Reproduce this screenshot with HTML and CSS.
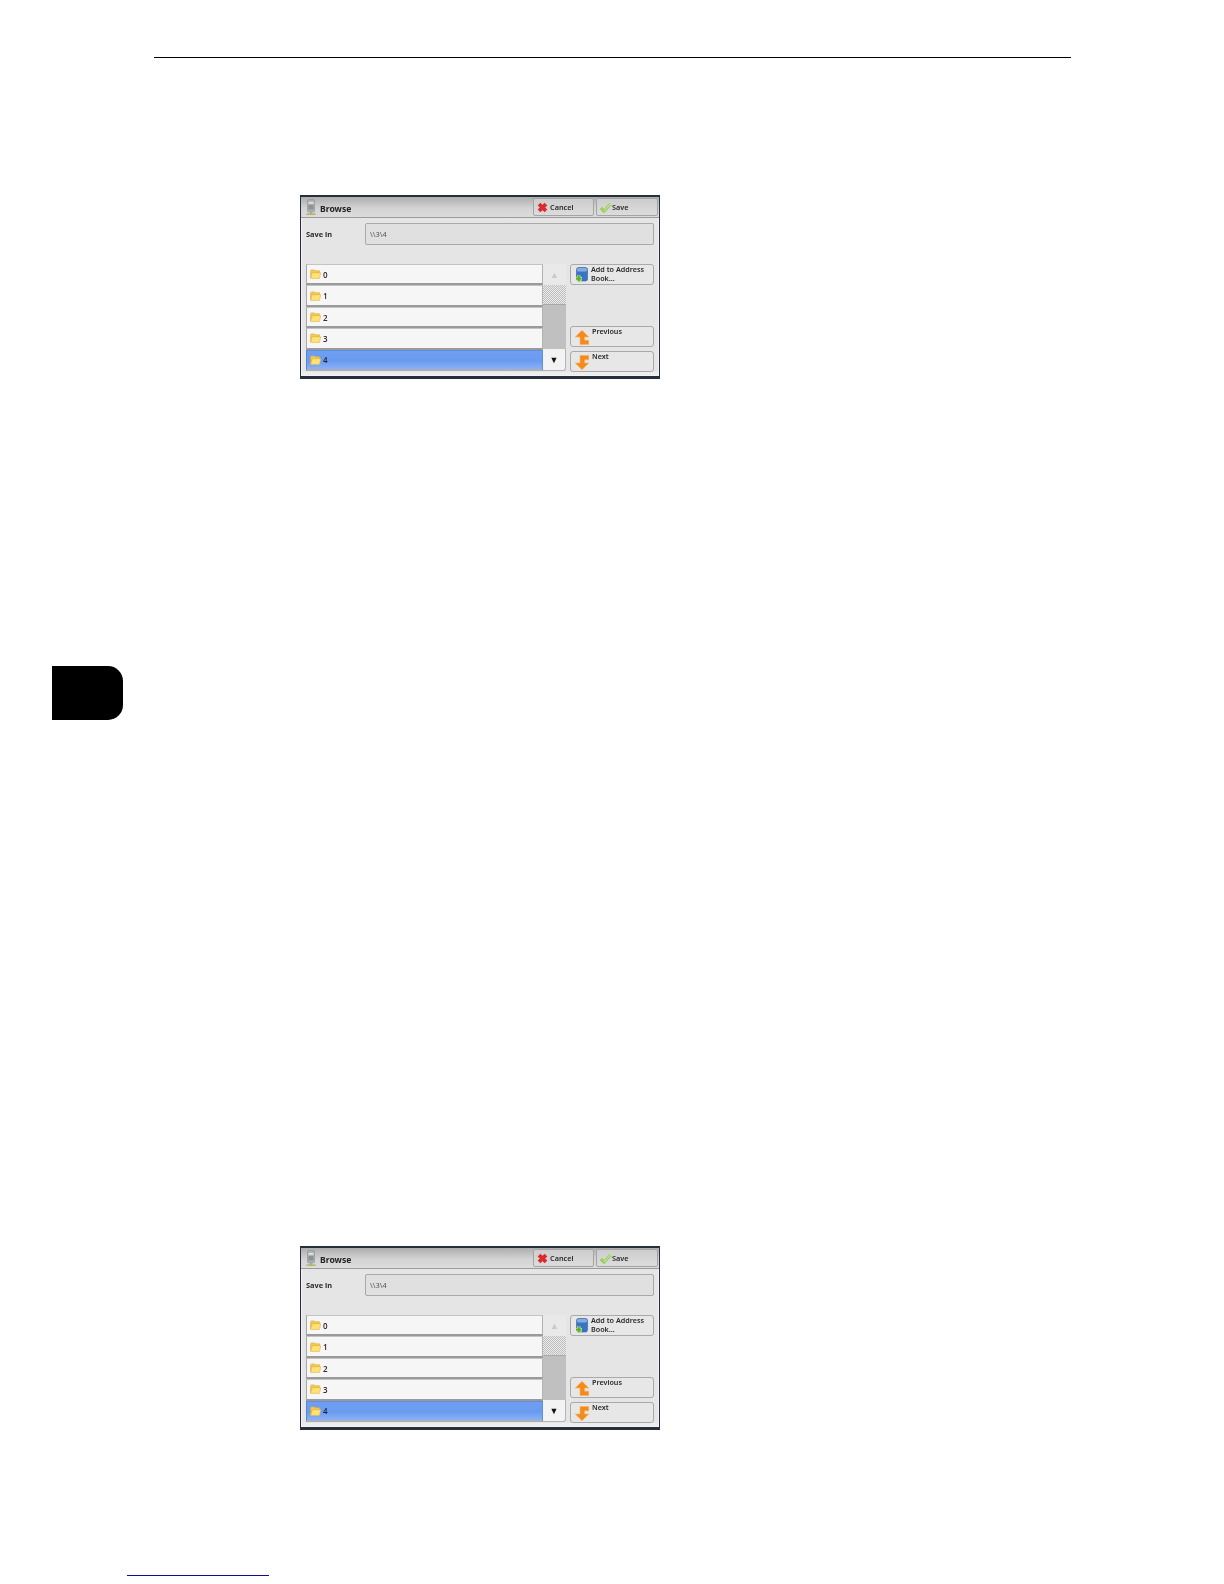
FILE: index.html
```html
<!DOCTYPE html>
<html lang="en">
<head>
<meta charset="utf-8">
<title>Browse</title>
<link rel="stylesheet" href="styles.css">
</head>
<body>
<svg class="sprite" xmlns="http://www.w3.org/2000/svg">
  <symbol id="i-device" viewBox="0 0 10 16">
    <rect x="1.5" y="0.5" width="7" height="12.5" rx="1.5" fill="#aeb2b4" stroke="#8b9092" stroke-width=".6"/>
    <rect x="2.5" y="3" width="5" height="1.6" fill="#e4e6e6"/>
    <rect x="2.5" y="6" width="5" height="4.5" fill="#8d9294"/>
    <path d="M5 13V15M0.5 15.2H9.5" stroke="#a9a848" stroke-width="1.2" fill="none"/>
  </symbol>
  <symbol id="i-folder" viewBox="0 0 11 10">
    <path d="M.6 8.8V1.6L1.4 .9H4.4L5.2 1.8H9.6V4H2Z" fill="#f2c94e" stroke="#dcae3a" stroke-width=".6"/>
    <path d="M.6 9.4 2.2 3.8H10.8L9.4 9.4Z" fill="#ffe37a" stroke="#e0b444" stroke-width=".6"/>
  </symbol>
  <symbol id="i-cancel" viewBox="0 0 12 12">
    <path d="M2.2 2.2 9.8 9.8M9.8 2.2 2.2 9.8" stroke="#dc2b30" stroke-width="4.2" fill="none"/>
  </symbol>
  <symbol id="i-save" viewBox="0 0 13 11">
    <path d="M1.8 6 5 9.2 11.5 2" stroke="#9ccf62" stroke-width="3.2" stroke-linejoin="round" fill="none"/>
    <path d="M5 9 11.5 2" stroke="#cfe89f" stroke-width="1" fill="none"/>
  </symbol>
  <symbol id="i-add" viewBox="0 0 13 15">
    <rect x="1.5" y="0.5" width="11" height="13.5" rx="2" fill="#3b74c2" stroke="#2f62aa" stroke-width=".6"/>
    <rect x="2" y="1" width="10" height="3.4" rx="1.5" fill="#86ade0"/>
    <path d="M3.8 8.4V15M.6 11.7H7" stroke="#d9f0c4" stroke-width="3.4"/>
    <path d="M3.8 8.8V14.6M1 11.7H6.6" stroke="#5cb02a" stroke-width="2.2"/>
  </symbol>
  <symbol id="i-up" viewBox="0 0 14 15">
    <path d="M7 .3 13.7 7H9.6V10.2H13.8V14.6H5V7H.3Z" fill="#f48a1e" stroke="#fbb256" stroke-width=".6"/>
  </symbol>
  <symbol id="i-down" viewBox="0 0 14 15">
    <path d="M13.8 .4V4.8H9.6V8H13.7L7 14.7.3 8H5V.4Z" fill="#f48a1e" stroke="#fbb256" stroke-width=".6"/>
  </symbol>
</svg>

<main class="page">
  <div class="top-rule"></div>

  <section class="screen screen-first">
    <header class="titlebar">
      <svg class="ico-device"><use href="#i-device"/></svg>
      <h2 class="title">Browse</h2>
      <div class="actions">
        <button class="action action-cancel"><svg class="ico-cancel"><use href="#i-cancel"/></svg>Cancel</button>
        <button class="action action-save"><svg class="ico-save"><use href="#i-save"/></svg>Save</button>
      </div>
    </header>
    <div class="savein">
      <span class="savein-label">Save in</span>
      <div class="savein-field">\\3\4</div>
    </div>
    <div class="browser">
      <ul class="folders">
        <li class="folder"><svg class="ico-folder"><use href="#i-folder"/></svg>0</li>
        <li class="folder"><svg class="ico-folder"><use href="#i-folder"/></svg>1</li>
        <li class="folder"><svg class="ico-folder"><use href="#i-folder"/></svg>2</li>
        <li class="folder"><svg class="ico-folder"><use href="#i-folder"/></svg>3</li>
        <li class="folder folder-selected"><svg class="ico-folder"><use href="#i-folder"/></svg>4</li>
      </ul>
      <div class="scroll">
        <div class="scroll-up">▲</div>
        <div class="scroll-thumb"></div>
        <div class="scroll-track"></div>
        <div class="scroll-down">▼</div>
      </div>
      <div class="side">
        <button class="side-btn"><svg class="ico-add"><use href="#i-add"/></svg><span class="side-text">Add to Address<br>Book...</span></button>
        <div class="side-nav">
          <button class="side-btn"><svg class="ico-arrow"><use href="#i-up"/></svg><span class="side-text">Previous</span></button>
          <button class="side-btn"><svg class="ico-arrow"><use href="#i-down"/></svg><span class="side-text">Next</span></button>
        </div>
      </div>
    </div>
  </section>

  <div class="chapter-tab"></div>

  <section class="screen screen-second">
    <header class="titlebar">
      <svg class="ico-device"><use href="#i-device"/></svg>
      <h2 class="title">Browse</h2>
      <div class="actions">
        <button class="action action-cancel"><svg class="ico-cancel"><use href="#i-cancel"/></svg>Cancel</button>
        <button class="action action-save"><svg class="ico-save"><use href="#i-save"/></svg>Save</button>
      </div>
    </header>
    <div class="savein">
      <span class="savein-label">Save in</span>
      <div class="savein-field">\\3\4</div>
    </div>
    <div class="browser">
      <ul class="folders">
        <li class="folder"><svg class="ico-folder"><use href="#i-folder"/></svg>0</li>
        <li class="folder"><svg class="ico-folder"><use href="#i-folder"/></svg>1</li>
        <li class="folder"><svg class="ico-folder"><use href="#i-folder"/></svg>2</li>
        <li class="folder"><svg class="ico-folder"><use href="#i-folder"/></svg>3</li>
        <li class="folder folder-selected"><svg class="ico-folder"><use href="#i-folder"/></svg>4</li>
      </ul>
      <div class="scroll">
        <div class="scroll-up">▲</div>
        <div class="scroll-thumb"></div>
        <div class="scroll-track"></div>
        <div class="scroll-down">▼</div>
      </div>
      <div class="side">
        <button class="side-btn"><svg class="ico-add"><use href="#i-add"/></svg><span class="side-text">Add to Address<br>Book...</span></button>
        <div class="side-nav">
          <button class="side-btn"><svg class="ico-arrow"><use href="#i-up"/></svg><span class="side-text">Previous</span></button>
          <button class="side-btn"><svg class="ico-arrow"><use href="#i-down"/></svg><span class="side-text">Next</span></button>
        </div>
      </div>
    </div>
  </section>

  <div class="footer-link"></div>
</main>
</body>
</html>
```

FILE: styles.css
```css
* { box-sizing: border-box; }
html, body { margin: 0; padding: 0; background: #fff; }
body { font-family: "Noto Sans", "Liberation Sans", sans-serif; color: #1c1c1c; }
.sprite { display: none; }

.page { height: 1584px; overflow: hidden; padding-top: 57px; }
.top-rule { height: 1px; width: 917px; margin-left: 154px; background: #000; }

.screen {
  width: 360px; height: 184px; margin-left: 300px;
  display: flex; flex-direction: column;
  background: #e5e5e5;
  border: 1px solid #26303c;
  border-top-width: 2px; border-bottom-width: 3px;
  box-shadow: inset 0 0 0 1px #f3f3f3, inset 0 -4px 0 #ededed;
  filter: blur(.3px);
}
.screen-first { margin-top: 137px; }
.screen-second { margin-top: 526px; }

.chapter-tab {
  width: 71px; height: 54px; margin: 287px 0 0 52px;
  background: #000; border-radius: 0 15px 15px 0;
}
.footer-link { width: 142px; height: 1px; margin: 145px 0 0 127px; background: #0e0e8a; }

/* title bar */
.titlebar {
  height: 21px; flex: none;
  display: flex; align-items: center;
  padding: 0 1px 0 5px;
  background: linear-gradient(#adadad, #d3d3d3 55%, #dcdcdc);
  border-bottom: 1px solid #9b9b9b;
}
.ico-device { width: 10px; height: 16px; margin-right: 4px; flex: none; }
.title { margin: 3px 0 0; font-size: 8.6px; font-weight: 700; color: #222; }
.actions { margin-left: auto; display: flex; gap: 2px; }
.action {
  height: 18px; margin: 0;
  display: flex; align-items: center;
  font: 600 7.3px "Noto Sans", "Liberation Sans", sans-serif; color: #2a2a2a;
  background: linear-gradient(#cdcdcd, #dcdcdc);
  border: 1px solid #a4a4a4; border-radius: 2px;
}
.action-cancel { width: 61px; padding: 0 0 0 3px; }
.action-save { width: 62px; padding: 0 0 0 2px; }
.ico-cancel { width: 11px; height: 11px; margin-right: 2px; }
.ico-save { width: 13px; height: 11px; }

/* save in row */
.savein { display: flex; align-items: center; height: 22px; margin-top: 5px; flex: none; padding-left: 5px; }
.savein-label { width: 59px; font-size: 7.4px; font-weight: 700; color: #2a2a2a; }
.savein-field {
  width: 289px; height: 22px; padding-left: 4px;
  display: flex; align-items: center;
  font-size: 7.4px; color: #555;
  background: #e0e0e0; border: 1px solid #a9a9a9; border-radius: 2px;
}

/* list, scroll bar, side buttons */
.browser { display: flex; align-items: flex-start; margin-top: 19px; padding-left: 5px; height: 108px; flex: none; }
.folders {
  width: 237px; height: 107px; margin: 0; padding: 0; list-style: none;
  display: flex; flex-direction: column;
}
.folder {
  flex: 1;
  display: flex; align-items: center; padding-left: 3px;
  font-size: 8px; font-weight: 600; color: #333;
  background: #f6f6f6;
  border-style: solid; border-width: 1px 1px 2px 1px;
  border-color: #c4c4c4 #b2b2b2 #9a9a9a #a8a8a8;
}
.folder-selected {
  background: linear-gradient(#6f9ff1, #6a9bf0 55%, #8ab1f5);
  border-color: #5f8fdc #5f8fdc #a9b0ba #5a85c8;
  color: #1b2a4a;
}
.ico-folder { width: 11px; height: 10px; margin-right: 2px; flex: none; }

.scroll { width: 23px; height: 107px; display: flex; flex-direction: column; }
.scroll-up {
  height: 21px; flex: none;
  display: flex; align-items: center; justify-content: center;
  font-size: 9px; color: #c8c8c8; background: #e9e9e9;
}
.scroll-thumb {
  height: 20px; flex: none;
  background: repeating-conic-gradient(#bdbdbd 0 25%, #ececec 0 50%) 0 0 / 2px 2px;
  border-bottom: 1px solid #a9a9a9;
}
.scroll-track { flex: 1; background: #c0c0c0; }
.scroll-down {
  height: 22px; flex: none;
  display: flex; align-items: center; justify-content: center;
  font-size: 9px; color: #111; background: #f3f3f3;
  border: 1px solid #b5b5b5; border-width: 0 1px 1px 0; border-radius: 0 0 3px 0;
}

.side { width: 84px; height: 108px; margin-left: 4px; display: flex; flex-direction: column; justify-content: space-between; }
.side-nav { display: flex; flex-direction: column; gap: 4px; }
.side-btn {
  width: 84px; height: 21px; margin: 0; padding: 0 0 0 4px;
  display: flex; align-items: flex-start; text-align: left;
  font: 600 7.2px/9px "Noto Sans", "Liberation Sans", sans-serif; color: #2a2a2a;
  background: #e7e7e7;
  border: 1px solid #a9a9a9; border-radius: 3px;
}
.ico-add { width: 13px; height: 15px; margin: 2px 3px 0 0; flex: none; }
.ico-arrow { width: 14px; height: 15px; margin: 3px 3px 0 0; flex: none; }
.side-text { white-space: nowrap; }
```
